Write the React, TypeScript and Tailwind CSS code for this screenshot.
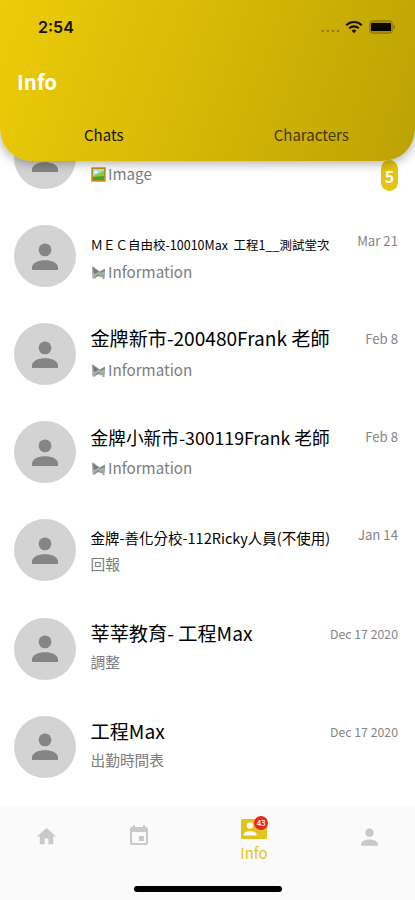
import React from 'react';
import { MdHome, MdEvent } from 'react-icons/md';

interface Chat {
  name: string;
  nameClass: string;
  message: string;
  kind?: 'image' | 'info';
  date?: string;
  dateClass?: string;
  unread?: number;
}

const chats: Chat[] = [
  { name: "", nameClass: "text-[19.1px]", message: "Image", kind: "image", unread: 5 },
  { name: "ＭＥＣ自由校-10010Max  工程1__測試堂次", nameClass: "text-[12.5px] pt-[5px]", message: "Information", kind: "info", date: "Mar 21", dateClass: "text-[13.2px]" },
  { name: "金牌新市-200480Frank 老師", nameClass: "text-[19.1px]", message: "Information", kind: "info", date: "Feb 8", dateClass: "text-[13.2px]" },
  { name: "金牌小新市-300119Frank 老師", nameClass: "text-[17.7px] pt-px", message: "Information", kind: "info", date: "Feb 8", dateClass: "text-[13.2px]" },
  { name: "金牌-善化分校-112Ricky人員(不使用)", nameClass: "text-[14.5px] pt-[4px]", message: "回報", date: "Jan 14", dateClass: "text-[13.2px]" },
  { name: "莘莘教育- 工程Max", nameClass: "text-[19.2px]", message: "調整", date: "Dec 17 2020", dateClass: "text-[12.3px]" },
  { name: "工程Max", nameClass: "text-[19.2px]", message: "出勤時間表", date: "Dec 17 2020", dateClass: "text-[12.3px]" },
];

const PersonIcon = ({ className }: { className?: string }) => (
  <svg viewBox="0 0 26 27" className={className} fill="currentColor">
    <circle cx="13" cy="6.900" r="6.400" />
    <path d="M0 27v-2.500c0-4.800 6.500-7.300 13-7.300s13 2.500 13 7.300V27z" />
  </svg>
);

const PictureIcon = () => (
  <svg width="15" height="15" viewBox="0 0 15 15" className="shrink-0">
    <rect width="15" height="15" rx="1" fill="#e6b422" />
    <rect x="1" y="1" width="13" height="13" fill="#c98d10" />
    <rect x="2" y="2" width="11" height="11" fill="#a9e4ee" />
    <path d="M2 9c3-2 6-3 11-5v9H2z" fill="#7fd04c" />
    <path d="M2 10c4 0 7-1 11-1v4H2z" fill="#41a82e" />
    <circle cx="5" cy="5" r="1.5" fill="#f4fbef" />
  </svg>
);

const MegaphoneIcon = () => (
  <svg width="15" height="15" viewBox="0 0 15 15" className="shrink-0">
    <path d="M.8 1.800c1-.8 2-.3 2.600.8L5 13c-1 1-2.800 1.100-3.600.3z" fill="#a9b1af" />
    <path d="M2.500 2 9 6.300 14 3.500v7l-5 .3L3.500 13z" fill="#a9b1af" />
    <path d="M1.800 2.200 8 6.800 3 9z" fill="#717b79" />
    <path d="M2.500 12.800 8 8.500l.5 2z" fill="#808a88" />
    <path d="M9 6.500 14 4v2.200L9 8z" fill="#7f8987" />
    <path d="M8.500 10.300 13.500 9.500V14l-2 .2v-2.200l-3 .3z" fill="#98a19f" />
  </svg>
);

const ContactIcon = () => (
  <svg width="26" height="20" viewBox="0 0 26 20">
    <path
      fill="#e3c41c"
      fillRule="evenodd"
      d="M1.500 0h23A1.500 1.500 0 0 1 26 1.500v17a1.500 1.500 0 0 1-1.500 1.500h-23A1.500 1.500 0 0 1 0 18.500v-17A1.500 1.500 0 0 1 1.500 0zM9 3.200a3.200 3.200 0 1 0 0 6.400 3.200 3.200 0 0 0 0-6.400zM2.700 16.500h12.800v-1.200c0-2.100-4.300-3.300-6.400-3.300s-6.400 1.200-6.400 3.300z"
    />
  </svg>
);

const StatusBar = () => (
  <div className="flex h-[54px] items-center justify-between pl-[38px] pr-[19px]">
    <span className="font-[Inter,sans-serif] text-[16px] font-semibold leading-none text-[#151202]">2:54</span>
    <div className="flex items-center">
      <svg width="19" height="14" viewBox="0 0 19 14" fill="#937f05">
        <circle cx="1.800" cy="11" r="1.300" />
        <circle cx="6.900" cy="11" r="1.300" />
        <circle cx="12" cy="11" r="1.300" />
        <circle cx="17" cy="11" r="1.300" />
      </svg>
      <svg width="18" height="14" viewBox="0 0 18 14" className="ml-[5px]" fill="none" stroke="#151202" strokeWidth="2.100">
        <path d="M1.300 5.200a11 11 0 0 1 15.400 0" />
        <path d="M4.200 8.300a6.900 6.900 0 0 1 9.600 0" />
        <path d="M9 13.200 6.600 10.800a3.400 3.400 0 0 1 4.800 0z" fill="#151202" stroke="none" />
      </svg>
      <svg width="27" height="14" viewBox="0 0 27 14" className="ml-[6px]">
        <rect x=".7" y=".7" width="22.600" height="12.600" rx="3" fill="#a38d05" stroke="#8f7b05" strokeWidth="1" />
        <rect x="2" y="3" width="20" height="8" rx=".5" fill="#080700" />
        <path d="M24.500 4.500c2 .7 2 4.300 0 5z" fill="#837205" />
      </svg>
    </div>
  </div>
);

const Header = () => (
  <header className="relative z-10 h-[161px] shrink-0 rounded-b-[32px] bg-[linear-gradient(110deg,#eccc08_0%,#d6b706_50%,#bca204_100%)] shadow-[0_2px_12px_rgba(0,0,0,0.35)]">
    <StatusBar />
    <h1 className="pl-[17px] pt-[11px] text-[20.5px] font-bold leading-[32px] text-white">Info</h1>
    <div className="mt-[26px] grid grid-cols-2 text-center text-[15px] leading-6">
      <span className="text-[#151202]">Chats</span>
      <span className="text-[#43390a]">Characters</span>
    </div>
  </header>
);

const ChatRow = ({ chat }: { chat: Chat }) => (
  <li className="flex h-[98.1px] items-center pl-[14px] pr-[17px]">
    <div className="flex size-[62px] shrink-0 items-center justify-center rounded-full bg-[#d3d3d3]">
      <PersonIcon className="h-[27px] w-[26px] text-[#858585]" />
    </div>
    <div className="ml-[14.5px] min-w-0 flex-1">
      <div className={`h-8 whitespace-pre leading-8 text-black ${chat.nameClass}`}>{chat.name}</div>
      <div className="flex h-8 items-center gap-[2.5px] text-[#7c7c7c]">
        {chat.kind === 'image' && <PictureIcon />}
        {chat.kind === 'info' && <MegaphoneIcon />}
        <span className={chat.kind ? "pb-px text-[15.2px]" : "pb-[5px] text-[14.7px]"}>{chat.message}</span>
      </div>
    </div>
    {chat.date && (
      <time className={`-mt-[30px] shrink-0 whitespace-nowrap leading-5 text-[#858585] ${chat.dateClass}`}>{chat.date}</time>
    )}
    {chat.unread && (
      <span className="mt-[35px] flex h-[31px] w-[17px] items-center justify-center rounded-full bg-[#e5c410] text-[16px] font-bold text-white">
        {chat.unread}
      </span>
    )}
  </li>
);

const BottomNav = () => (
  <nav className="h-[94px] shrink-0 bg-[#fafafa]">
    <div className="grid h-[60px] grid-cols-[92px_93px_138px_92px] text-[#c9c9c9]">
      <button type="button" className="flex items-center justify-center">
        <MdHome className="size-[23px]" />
      </button>
      <button type="button" className="flex items-center justify-center">
        <MdEvent className="size-6" />
      </button>
      <button type="button" className="flex flex-col items-center pt-[13px] text-[#e3c41c]">
        <span className="relative h-5">
          <ContactIcon />
          <span className="absolute -top-[3px] left-[13px] flex size-[14px] items-center justify-center rounded-full bg-[#e8281c] text-[8px] font-medium tracking-tighter text-white">
            43
          </span>
        </span>
        <span className="mt-[2px] text-[15px] leading-6">Info</span>
      </button>
      <button type="button" className="flex items-center justify-center pt-px">
        <PersonIcon className="h-[18px] w-[17px]" />
      </button>
    </div>
    <div className="mx-auto mt-5 h-[6px] w-[148px] rounded-full bg-black" />
  </nav>
);

const App = () => {
  return (
    <div className="flex h-[900px] w-[415px] flex-col overflow-hidden bg-white font-['Noto_Sans_CJK_TC',sans-serif]">
      <Header />
      <main className="-mt-[52px] flex-1 overflow-hidden">
        <ul>
          {chats.map((chat, i) => (
            <ChatRow key={i} chat={chat} />
          ))}
        </ul>
      </main>
      <BottomNav />
    </div>
  );
};

export default App;
